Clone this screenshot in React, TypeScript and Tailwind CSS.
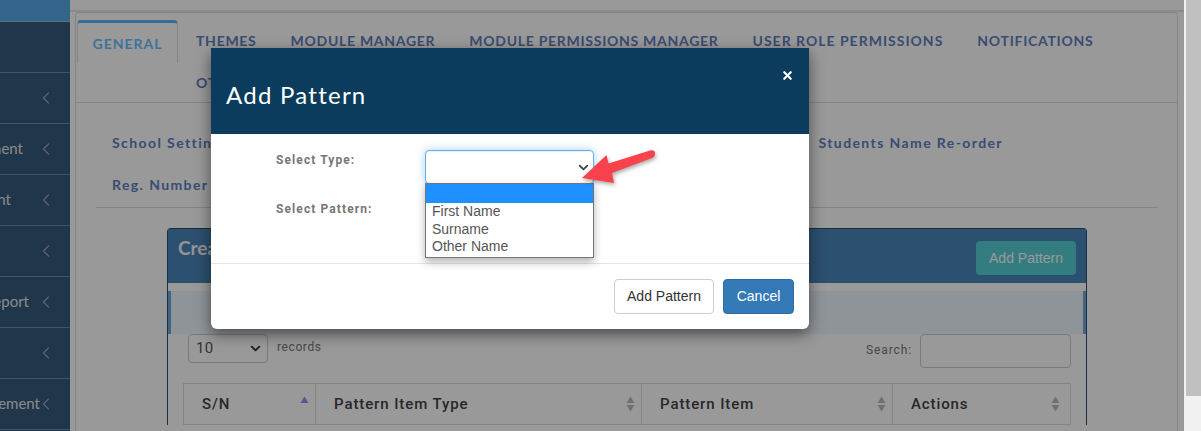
import React from 'react';
import { ChevronLeft, ChevronDown, X } from 'lucide-react';

const sidebarRows = [
  { text: '', end: 'w-[0px]' },
  { text: 'Management', end: 'w-[23px]' },
  { text: 'Assessment', end: 'w-[11px]' },
  { text: '', end: 'w-[0px]' },
  { text: 'Report', end: 'w-[29px]' },
  { text: '', end: 'w-[0px]' },
  { text: 'Management', end: 'w-[40px]' },
];

const tabs = ['THEMES', 'MODULE MANAGER', 'MODULE PERMISSIONS MANAGER', 'USER ROLE PERMISSIONS', 'NOTIFICATIONS', 'OTHER'];
const raleway = "font-['Lato','Open_Sans',sans-serif]";

const SortArrows = ({ active }: { active?: boolean }) => (
  <svg width="9" height="16" viewBox="0 0 9 16" className="shrink-0">
    <path d="M4.5 0.5 L8.5 7 H0.5 Z" fill={active ? '#8f8ff0' : '#bdbdbd'} />
    {!active && <path d="M4.5 15.5 L8.5 9 H0.5 Z" fill="#bdbdbd" />}
  </svg>
);

export default function App() {
  return (
    <div className="relative flex h-[431px] w-[1201px] overflow-hidden bg-[#f1f1f1]">
      <div className="relative flex h-full w-[1184px] overflow-hidden bg-white">
        {/* sidebar, pushed off screen on the left */}
        <aside className="flex w-[70px] shrink-0 flex-col overflow-hidden bg-[#345a7d]">
          <div className="h-[22px] shrink-0 border-b border-[#9db8cc] bg-[#55a7e6]" />
          <div className="h-[51px] shrink-0 border-b border-[#6f8aa3]" />
          {sidebarRows.map((r, i) => (
            <div key={i} className="flex h-[51px] shrink-0 items-center border-b border-[#6f8aa3]">
              <div className={`flex shrink-0 justify-end pb-[2px] ${r.end}`}>
                <span className={`shrink-0 whitespace-nowrap text-[15px] text-[#e4e4e4] ${raleway}`}>{r.text}</span>
              </div>
              <ChevronLeft size={20} strokeWidth={1.5} className="absolute left-[36px] text-[#9aa5af]" />
            </div>
          ))}
        </aside>

        {/* page content */}
        <main className="min-w-0 flex-1">
          <div className="h-[12px] border-b-2 border-[#e8e8e8]" />
          <div className="ml-[5px] mr-[6px] h-[419px] rounded-t border-x border-t border-[#ddd]">
            <div className="flex h-[90px] border-b border-[#ddd] pl-[1px] pt-[7px]">
              <div className={`flex h-[43px] w-[101px] shrink-0 items-center justify-center rounded-t border-x border-t-[3px] border-x-[#ddd] border-t-[#55b8ff] text-[14px] font-bold tracking-[1px] text-[#6abfff] ${raleway}`}>
                GENERAL
              </div>
              <div className="flex min-w-0 flex-1 flex-wrap content-start pl-[18px]">
                {tabs.map(t => (
                  <span key={t} className={`mr-[34px] h-[42px] pt-[10px] text-[14px] font-bold text-[#6180bf] ${t.startsWith('USER') ? 'tracking-[1px]' : 'tracking-[0.72px]'} ${raleway}`}>{t}</span>
                ))}
              </div>
            </div>

            <div className="mx-[20px] h-[105px] border-b border-[#ddd] pl-[16px] pt-[29px]">
              <div className={`flex justify-between pr-[154px] text-[14px] font-bold tracking-[1.4px] text-[#6180bf] ${raleway}`}>
                <span>School Settings</span>
                <span>Students Name Re-order</span>
              </div>
              <div className={`mt-[21px] text-[14px] font-bold tracking-[1.4px] text-[#6180bf] ${raleway}`}>Reg. Number</div>
            </div>

            <section className="ml-[91px] mt-[20px] w-[920px] rounded-t border-x border-t border-[#2b4d6c]">
              <div className="flex h-[54px] items-start justify-between bg-[#4a85ba] px-[10px] pt-[12px]">
                <h3 className={`-mt-[7px] text-[19px] font-bold text-[#f5f5f5] ${raleway}`}>Create Pattern</h3>
                <button className="h-[34px] w-[100px] rounded bg-[#55cfd5] font-['Liberation_Sans',sans-serif] text-[14px] text-white">Add Pattern</button>
              </div>
              <div className="mt-[8px] h-[43px] border-x-[3px] border-x-[#6fa8dc] bg-[#eef7ff]" />
              <div className="flex justify-between px-[15px]">
                <div className="ml-[5px] flex">
                  <div className="flex h-[29px] w-[80px] items-center justify-between rounded border border-[#ccc] pl-[7px] pr-[4px] font-['Roboto',sans-serif] text-[15px] tracking-[0.4px] text-[#555]">
                    10
                    <ChevronDown size={15} strokeWidth={3} className="text-[#333]" />
                  </div>
                  <span className="ml-[9px] mt-[4px] font-['Roboto',sans-serif] text-[12px] tracking-[0.6px] text-[#777]">records</span>
                </div>
                <div className="flex">
                  <span className="mr-[8px] mt-[7px] font-['Roboto',sans-serif] text-[12px] tracking-[0.9px] text-[#777]">Search:</span>
                  <div className="h-[34px] w-[151px] rounded border border-[#ccc]" />
                </div>
              </div>
              <div className="mx-[15px] mt-[15px] flex h-[42px] border border-[#ddd] font-['Roboto',sans-serif] text-[15px] font-medium tracking-[0.9px] text-[#444]">
                <div className="flex w-[132px] items-center justify-between border-r border-[#ddd] pl-[18px] pr-[6px]">S/N<SortArrows active /></div>
                <div className="flex w-[326px] items-center justify-between border-r border-[#ddd] pl-[18px] pr-[6px]">Pattern Item Type<SortArrows /></div>
                <div className="flex w-[251px] items-center justify-between border-r border-[#ddd] pl-[18px] pr-[6px]">Pattern Item<SortArrows /></div>
                <div className="flex flex-1 items-center justify-between pl-[18px] pr-[10px]">Actions<SortArrows /></div>
              </div>
            </section>
          </div>
        </main>

        {/* backdrop */}
        <div className="absolute inset-0 bg-black/40" />

        {/* modal */}
        <div className="absolute left-[211px] top-[48px] flex h-[281px] w-[598px] flex-col overflow-hidden rounded-b-md bg-white shadow-[0_5px_15px_rgba(0,0,0,0.5)]">
          <header className="relative flex h-[86px] shrink-0 items-center bg-[#0b3c5d] pl-[15px] pt-[8px]">
            <h4 className={`text-[24px] tracking-[1.25px] text-white ${raleway}`}>Add Pattern</h4>
            <X size={13} strokeWidth={4} className="absolute right-[15px] top-[21px] text-white" />
          </header>
          <div className="h-[130px] shrink-0 border-b border-[#e5e5e5] pl-[65px] pt-[17px] font-['Roboto',sans-serif] text-[12px] font-bold tracking-[1.1px] text-[#777]">
            <div>Select Type:</div>
            <div className="mt-[31px]">Select Pattern:</div>
          </div>
          <footer className="flex flex-1 justify-end gap-[9px] pr-[15px] pt-[15px] font-['Liberation_Sans',sans-serif] text-[14px]">
            <button className="h-[35px] w-[100px] rounded border border-[#ccc] bg-white text-[#333]">Add Pattern</button>
            <button className="h-[35px] w-[71px] rounded border border-[#2e6da4] bg-[#337ab7] text-white">Cancel</button>
          </footer>
        </div>

        {/* open select with its option list */}
        <div className="absolute left-[425px] top-[150px] h-[34px] w-[169px] rounded border border-[#66afe9] bg-white shadow-[inset_0_1px_1px_rgba(0,0,0,0.075),0_0_8px_rgba(102,175,233,0.6)]">
          <ChevronDown size={15} strokeWidth={3} className="absolute right-[2px] top-[9px] text-[#444]" />
        </div>
        <div className="absolute left-[425px] top-[183px] w-[169px] border border-[#767676] bg-white font-['Liberation_Sans',sans-serif] text-[14px] leading-[17.5px] text-[#555] shadow-[0_4px_8px_rgba(0,0,0,0.3)]">
          <div className="h-[19px] bg-[#1e90ff]" />
          <div className="pb-[1px] pl-[6px]">
            <div>First Name</div>
            <div>Surname</div>
            <div>Other Name</div>
          </div>
        </div>

        {/* annotation arrow */}
        <svg width="90" height="50" viewBox="0 0 90 50" className="absolute left-[575px] top-[142px] drop-shadow-[1px_2px_2px_rgba(0,0,0,0.35)]">
          <path d="M7 36 L31.5 13 L33.5 21.5 L75 8.5 Q80 7.5 80 11.5 Q80 14.5 77 16 L37 31 L39 41 Z" fill="#f9424b" />
        </svg>
      </div>

      {/* scrollbar */}
      <div className="ml-[2px] h-[396px] w-[15px] bg-[#c0c0c0]" />
    </div>
  );
}
